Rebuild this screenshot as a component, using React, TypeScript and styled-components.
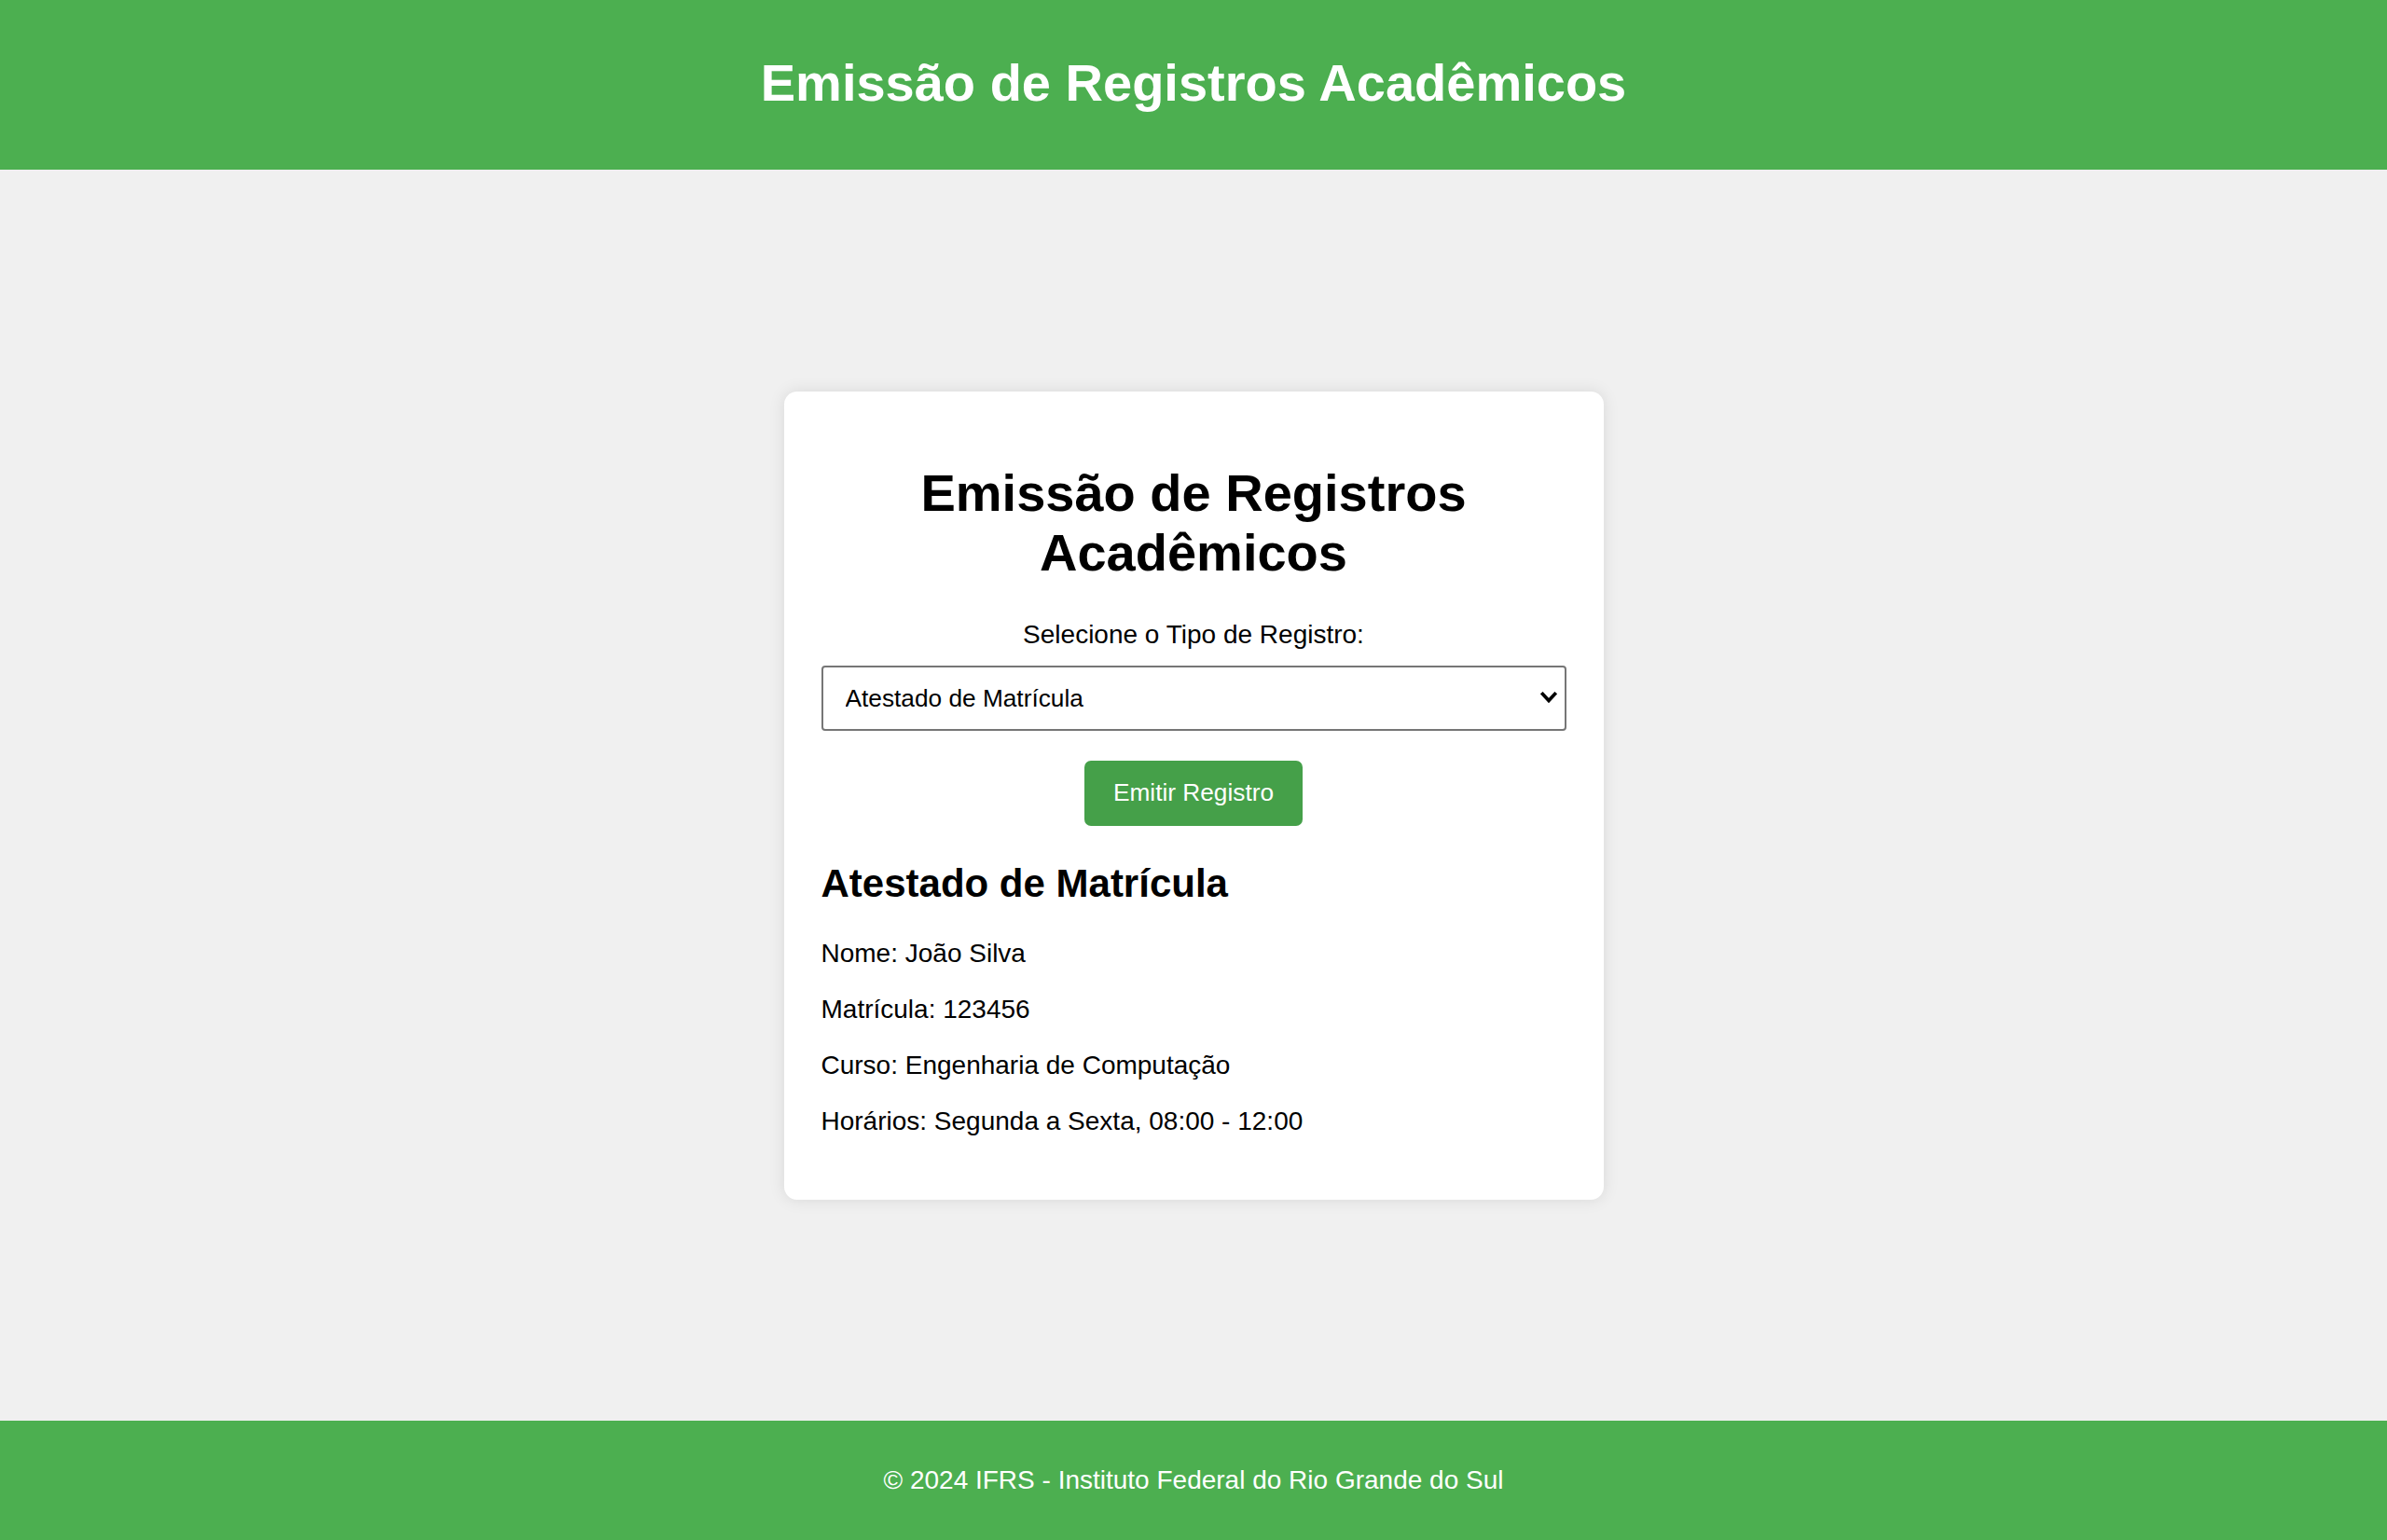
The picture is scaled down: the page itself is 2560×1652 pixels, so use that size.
import React, { useState } from "react";
import styled, { createGlobalStyle } from "styled-components";

const GlobalStyle = createGlobalStyle`
  html, body {
    margin: 0;
    padding: 0;
    background: #f0f0f0;
    font-family: "Liberation Sans", Arial, sans-serif;
    color: #000;
  }
  * { box-sizing: border-box; }
`;

const Page = styled.div`
  display: flex;
  flex-direction: column;
  min-height: 100vh;
`;

const Header = styled.header`
  background: #4caf50;
  color: #fff;
  text-align: center;
  padding: 57px 0 61px;
`;

const HeaderTitle = styled.h1`
  margin: 0;
  font-size: 56px;
  line-height: 64px;
  font-weight: 700;
`;

const Main = styled.main`
  flex: 1;
  display: flex;
  align-items: center;
  justify-content: center;
`;

const Card = styled.section`
  width: 879px;
  background: #fff;
  border-radius: 14px;
  box-shadow: 0 0 17px rgba(0, 0, 0, 0.1);
  padding: 40px;
  text-align: center;
`;

const CardTitle = styled.h1`
  margin: 37px 0 40px;
  font-size: 56px;
  line-height: 64px;
  font-weight: 700;
`;

const Label = styled.label`
  display: block;
  font-size: 28px;
  line-height: 32px;
  margin-bottom: 17px;
`;

const SelectWrap = styled.div`
  position: relative;
  width: 100%;
  height: 70px;
`;

const Select = styled.select`
  appearance: none;
  -webkit-appearance: none;
  width: 100%;
  height: 70px;
  border: 2px solid #767676;
  border-radius: 4px;
  background: #fff;
  padding: 0 50px 0 24px;
  font-family: "Liberation Sans", Arial, sans-serif;
  font-size: 26.25px;
  color: #000;
  outline: none;
`;

const Chevron = styled.svg`
  position: absolute;
  right: 10px;
  top: 28px;
  width: 18px;
  height: 13px;
  pointer-events: none;
`;

const Button = styled.button`
  margin-top: 32px;
  background: #45a049;
  color: #fff;
  border: none;
  border-radius: 7px;
  padding: 0 31px;
  height: 70px;
  font-family: "Liberation Sans", Arial, sans-serif;
  font-size: 26.25px;
  cursor: pointer;
`;

const Result = styled.div`
  text-align: left;
`;

const ResultTitle = styled.h2`
  margin: 38px 0 35px;
  font-size: 42px;
  line-height: 48px;
  font-weight: 700;
`;

const Line = styled.p`
  margin: 28px 0;
  font-size: 28px;
  line-height: 32px;
  &:first-of-type { margin-top: 0; }
`;

const Footer = styled.footer`
  background: #4caf50;
  color: #fff;
  text-align: center;
  padding: 48px 0;
  font-size: 28px;
  line-height: 32px;
`;

export default function App() {
  const [tipo, setTipo] = useState("matricula");
  return (
    <Page>
      <GlobalStyle />
      <Header>
        <HeaderTitle>Emissão de Registros Acadêmicos</HeaderTitle>
      </Header>
      <Main>
        <Card>
          <CardTitle>
            Emissão de Registros
            <br />
            Acadêmicos
          </CardTitle>
          <Label htmlFor="tipo">Selecione o Tipo de Registro:</Label>
          <SelectWrap>
            <Select id="tipo" value={tipo} onChange={(e) => setTipo(e.target.value)}>
              <option value="matricula">Atestado de Matrícula</option>
              <option value="historico">Histórico Escolar</option>
              <option value="conclusao">Certificado de Conclusão</option>
            </Select>
            <Chevron viewBox="0 0 18 13">
              <path d="M2.5 2.5 L9 9.5 L15.5 2.5" fill="none" stroke="#000" strokeWidth="3.6" strokeLinecap="square" />
            </Chevron>
          </SelectWrap>
          <Button type="button">Emitir Registro</Button>
          <Result>
            <ResultTitle>Atestado de Matrícula</ResultTitle>
            <Line>Nome: João Silva</Line>
            <Line>Matrícula: 123456</Line>
            <Line>Curso: Engenharia de Computação</Line>
            <Line>Horários: Segunda a Sexta, 08:00 - 12:00</Line>
          </Result>
        </Card>
      </Main>
      <Footer>© 2024 IFRS - Instituto Federal do Rio Grande do Sul</Footer>
    </Page>
  );
}
